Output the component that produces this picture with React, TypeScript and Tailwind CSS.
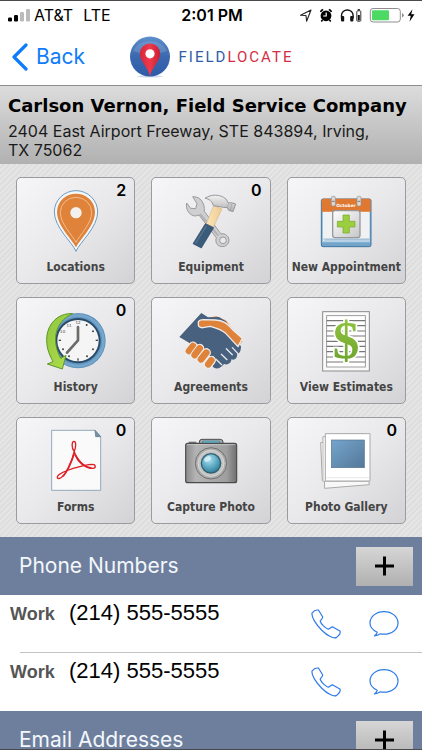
import type { ReactNode } from "react";

const sans = "font-['Inter','Liberation_Sans',sans-serif]";
const labelFont = "font-['DejaVu_Sans_Condensed','DejaVu_Sans',sans-serif]";

function StatusBar() {
  return (
    <div className="flex h-7 items-center justify-between pl-2 pr-1.5 text-black">
      <div className="flex flex-1 items-center">
        <svg viewBox="0 0 22 13" className="mr-1 h-[13px] w-[22px]">
          <rect x="0" y="8.5" width="4" height="4" rx="1.2" fill="#000" />
          <rect x="6" y="6" width="4" height="6.5" rx="1.2" fill="#000" />
          <rect x="12" y="3" width="4" height="9.5" rx="1.2" fill="#bbb" />
          <rect x="18" y="0" width="4" height="12.5" rx="1.2" fill="#bbb" />
        </svg>
        <span className="text-base">AT&amp;T</span>
        <span className="ml-2.5 text-base">LTE</span>
      </div>
      <span className="text-base font-semibold">2:01 PM</span>
      <div className="flex flex-1 items-center justify-end">
        <svg viewBox="0 0 117 18" className="h-[18px] w-[117px]">
          <path d="M1.5 9.2 12 4 7.6 15.2 7 9.5Z" fill="none" stroke="#222" strokeWidth="1.1" strokeLinejoin="round" />
          <circle cx="27" cy="9.8" r="5.4" fill="#000" />
          <path d="M21.6 6a3 3 0 0 1 2.6-2.4M32.4 6a3 3 0 0 0-2.6-2.4M23.5 14l-1.2 1.6M30.5 14l1.2 1.6" stroke="#000" strokeWidth="1.6" fill="none" />
          <path d="M27.2 6.5v3.5h-3" fill="none" stroke="#fff" strokeWidth="1.2" />
          <path d="M42.5 12.5V9.2a5.8 5.2 0 0 1 11.6 0v3.3" fill="none" stroke="#111" strokeWidth="1.4" />
          <rect x="42" y="10" width="3.2" height="5.6" rx="1" fill="#111" />
          <rect x="51.2" y="10" width="3.2" height="5.6" rx="1" fill="#111" />
          <rect x="57.8" y="4.8" width="4" height="10.4" rx=".8" fill="none" stroke="#333" strokeWidth="1" />
          <rect x="58.7" y="3" width="2.2" height="1.5" fill="#333" />
          <rect x="58.8" y="9" width="2" height="5.4" fill="#111" />
          <rect x="71.3" y="2.5" width="30" height="13.5" rx="2.8" fill="#fff" stroke="#8d8d8d" strokeWidth="1" />
          <rect x="73" y="4.3" width="17" height="10" rx="1" fill="#4cd964" />
          <path d="M103 7v4.6q1.8-.8 1.8-2.3T103 7Z" fill="#8d8d8d" />
          <path d="M113.5 3.2 108.6 9.8h3.2l-1.3 6 5-7.6h-3.3Z" fill="#000" />
        </svg>
      </div>
    </div>
  );
}

function NavBar() {
  return (
    <div className="grid h-14 grid-cols-[1fr_auto_1fr] items-center px-3">
      <button type="button" className="flex items-center gap-2 justify-self-start text-[#0f7cfa]">
        <svg viewBox="0 0 16 28" className="h-7 w-4">
          <path d="M14 2 2 14l12 12" fill="none" stroke="currentColor" strokeWidth="3.2" strokeLinecap="round" strokeLinejoin="round" />
        </svg>
        <span className="text-[21px] leading-7">Back</span>
      </button>
      <div className="flex items-center gap-2">
        <svg viewBox="0 0 42 42" className="h-[42px] w-[42px]">
          <defs>
            <linearGradient id="globe" x1="0" y1="0" x2="0" y2="1">
              <stop offset="0" stopColor="#5d8fcd" />
              <stop offset=".5" stopColor="#3c68ae" />
              <stop offset="1" stopColor="#2d5ba8" />
            </linearGradient>
            <linearGradient id="redPin" x1="0" y1="0" x2="1" y2="0">
              <stop offset="0" stopColor="#d8273a" />
              <stop offset=".5" stopColor="#ee3a4c" />
              <stop offset="1" stopColor="#c81f33" />
            </linearGradient>
          </defs>
          <ellipse cx="21" cy="40.3" rx="13" ry="1.2" fill="#cfdaec" />
          <circle cx="21" cy="20.6" r="20" fill="url(#globe)" />
          <path d="M4 15a18 15 0 0 1 34 0Q21 22 4 15Z" fill="#fff" opacity=".13" />
          <path d="M21 40.4C19.5 32 10.8 25 10.8 17.8a10.2 10.2 0 0 1 20.4 0C31.2 25 22.5 32 21 40.4Z" fill="url(#redPin)" />
          <circle cx="21" cy="17.8" r="4.6" fill="#fff" />
        </svg>
        <span className="font-['Roboto',sans-serif] text-[15px] tracking-[2px]">
          <span className="text-[#2f5da8]">FIELD</span>
          <span className="text-[#d42e45]">LOCATE</span>
        </span>
      </div>
    </div>
  );
}

function Icon({ children }: { children: ReactNode }) {
  return (
    <svg viewBox="48 30 300 225" className="h-[75px] w-[100px]">
      {children}
    </svg>
  );
}

const locations = (
  <Icon>
    <path d="M198 244C186 216 133 172 133 126a65 64 0 0 1 130 0C263 172 210 216 198 244Z" fill="#f4f6f8" stroke="#6c9bc0" strokeWidth="3" />
    <path d="M198 232C188 210 141 168 141 126a57 55 0 0 1 114 0C255 168 208 210 198 232Z" fill="#e0833a" />
    <path d="M198 217C188 196 151 162 151 127a47 45 0 0 1 94 0C245 162 208 196 198 217Z" fill="none" stroke="#f3bb8d" strokeWidth="3" />
    <circle cx="198" cy="128" r="17" fill="#f3f1ef" />
  </Icon>
);

const equipment = (
  <Icon>
    <defs>
      <linearGradient id="steel" x1="0" y1="0" x2="0" y2="1">
        <stop offset="0" stopColor="#f2f2f2" />
        <stop offset="1" stopColor="#b0b0b0" />
      </linearGradient>
      <linearGradient id="wood" x1="0" y1="0" x2="1" y2="0">
        <stop offset="0" stopColor="#fbe5ba" />
        <stop offset="1" stopColor="#eecb92" />
      </linearGradient>
    </defs>
    <path d="M143 80 156 101 152 116 137 115 125 99C121 116 132 137 151 138L162 135 214 203C208 221 222 233 238 229 253 224 256 207 246 197 239 190 231 191 228 192L178 124C180 101 168 79 143 80Z" fill="#cfcfd1" stroke="#9b9b9e" strokeWidth="3" strokeLinejoin="round" />
    <path d="M165 132 220 197" stroke="#b3b3b6" strokeWidth="6" />
    <circle cx="234" cy="211" r="10" fill="#e9e9e9" stroke="#9b9b9e" strokeWidth="3" />
    <path d="M206 107 231 117 205 172 184 161Z" fill="url(#wood)" stroke="#d3ad74" strokeWidth="1.5" />
    <path d="M181 161 206 173 169 234 144 221Z" fill="#3b5b7b" stroke="#2c4762" strokeWidth="2" strokeLinejoin="round" />
    <path d="M184 168 152 220" stroke="#55758f" strokeWidth="4" />
    <path d="M180 85C198 72 226 72 243 87L250 99 259 98 272 102 264 125 251 121 247 113 235 112 205 107C202 95 193 86 180 85Z" fill="url(#steel)" stroke="#989898" strokeWidth="3" strokeLinejoin="round" />
    <path d="M251 100 247 113M261 100 255 121" stroke="#999" strokeWidth="2" />
  </Icon>
);

const appointment = (
  <Icon>
    <defs>
      <linearGradient id="plusPad" x1="0" y1="0" x2="1" y2="1">
        <stop offset="0" stopColor="#fff" />
        <stop offset="1" stopColor="#c6c6c6" />
      </linearGradient>
    </defs>
    <rect x="124" y="87" width="149" height="143" rx="5" fill="#73a5cb" stroke="#3e759f" strokeWidth="3" />
    <path d="M127 100H270V217H127Z" fill="#b9d1e4" />
    <path d="M129 124H268V207H138L129 214Z" fill="#f0f1f2" />
    <path d="M125 125V91q0-5 5-5H267q5 0 5 5V125Z" fill="#df7931" />
    <path d="M129 207H268" stroke="#7da5c7" strokeWidth="2" />
    <text x="198" y="111" textAnchor="middle" fontSize="13" fontWeight="700" fill="#fff" className="font-['DejaVu_Sans',sans-serif]">October</text>
    <rect x="154" y="79" width="12" height="29" rx="4" fill="#d9d9d9" stroke="#929292" strokeWidth="2" />
    <rect x="231" y="79" width="12" height="29" rx="4" fill="#d9d9d9" stroke="#929292" strokeWidth="2" />
    <path d="M156 94H164M233 94H241" stroke="#777" strokeWidth="3" />
    <rect x="158" y="122" width="82" height="81" rx="7" fill="url(#plusPad)" stroke="#96999c" strokeWidth="4" />
    <path d="M189 135h19v19h17v17h-17v18h-19v-18h-17v-17h17Z" fill="#9bcf3f" stroke="#74a62c" strokeWidth="2" />
  </Icon>
);

const history = (
  <Icon>
    <defs>
      <linearGradient id="greenArrow" x1="0" y1="0" x2="1" y2="1">
        <stop offset="0" stopColor="#8dc641" />
        <stop offset="1" stopColor="#b4e04b" />
      </linearGradient>
    </defs>
    <circle cx="204" cy="152" r="83" fill="#5f94bd" />
    <circle cx="204" cy="152" r="76" fill="none" stroke="#76a6cb" strokeWidth="8" />
    <circle cx="204" cy="152" r="68" fill="#294a68" />
    <circle cx="204" cy="152" r="62" fill="#f5f5f5" />
    <g fill="#444">
      <rect x="257" y="149" width="7" height="4" />
      <rect x="146" y="149" width="7" height="4" />
      <rect x="202" y="205" width="4" height="7" />
      <circle cx="249" cy="178" r="3" />
      <circle cx="231" cy="199" r="3" />
      <circle cx="159" cy="178" r="3" />
      <circle cx="177" cy="199" r="3" />
      <circle cx="249" cy="124" r="3" />
      <circle cx="230" cy="105" r="3" />
    </g>
    <g fontSize="12" fill="#444" textAnchor="middle" className="font-['DejaVu_Sans',sans-serif]">
      <text x="204" y="102">12</text>
      <text x="177" y="110">11</text>
      <text x="158" y="128">10</text>
    </g>
    <path d="M204 111V151L171 188" fill="none" stroke="#6b6b6b" strokeWidth="8" strokeLinecap="round" strokeLinejoin="round" />
    <path d="M188 71C144 68 110 103 110 149C110 180 121 199 129 215L112 222 157 237 168 196 152 205C139 180 135 158 137 139C140 107 160 83 188 71Z" fill="url(#greenArrow)" stroke="#5f9627" strokeWidth="3" strokeLinejoin="round" />
  </Icon>
);

const agreements = (
  <Icon>
    <path d="M190 83 214 79 242 91 292 154 280 169 247 128Z" fill="#e0833a" />
    <path d="M169 69 189 82 222 81 245 96 236 113 288 169C288 183 283 192 276 193 278 204 269 212 259 208 259 220 247 226 237 222 229 233 216 239 207 233L132 158 103 141Z" fill="#47617e" />
    <path d="M244 176 262 194M229 193 246 209M213 208 230 224M262 173 279 191" fill="none" stroke="#e9e9eb" strokeWidth="4" strokeLinecap="round" />
    <path d="M160 101C158 92 166 89 176 89L211 90C235 91 247 100 263 119L292 145 279 170 242 130C228 117 210 113 195 109L174 113C164 114 159 109 160 101Z" fill="#e0833a" stroke="#ededee" strokeWidth="4" strokeLinejoin="round" />
    <g stroke="#ededee" strokeLinecap="round">
      <path d="M132 183 144 168M149 195 164 175M168 208 184 188M190 223 199 211" strokeWidth="27" />
      <path d="M132 183 144 168" stroke="#e0833a" strokeWidth="20" />
      <path d="M149 195 164 175" strokeWidth="26" />
      <path d="M149 195 164 175" stroke="#e0833a" strokeWidth="20" />
      <path d="M168 208 184 188" strokeWidth="26" />
      <path d="M168 208 184 188" stroke="#e0833a" strokeWidth="20" />
      <path d="M190 223 199 211" strokeWidth="26" />
      <path d="M190 223 199 211" stroke="#e0833a" strokeWidth="20" />
    </g>
  </Icon>
);

const estimates = (
  <Icon>
    <defs>
      <linearGradient id="dollar" x1="0" y1="0" x2="0" y2="1">
        <stop offset="0" stopColor="#96cb42" />
        <stop offset="1" stopColor="#699e2c" />
      </linearGradient>
    </defs>
    <rect x="128" y="65" width="140" height="178" fill="#fafafa" stroke="#8b8b8b" strokeWidth="3" />
    <rect x="140" y="77" width="116" height="154" fill="#fff" stroke="#8b8b8b" strokeWidth="2.5" />
    <path d="M140 92H256M140 107H256M140 123H256M140 138H256M140 154H256M140 169H256M140 185H256M140 201H256M140 216H256" stroke="#777" strokeWidth="3.5" />
    <text x="198" y="203" textAnchor="middle" fontSize="160" fontWeight="700" fill="url(#dollar)" stroke="#fff" strokeWidth="10" paintOrder="stroke" className="font-['Liberation_Serif',serif]">$</text>
  </Icon>
);

const forms = (
  <Icon>
    <path d="M125 61H255L272 80V241H125Z" fill="#fafafa" stroke="#7e9bb2" strokeWidth="2.5" />
    <path d="M255 61 272 80H257Z" fill="#7691a6" stroke="#587489" strokeWidth="2" />
    <path d="M192 123C184 113 185 94 192 94C199 94 198 111 193 124C186 153 166 199 149 205C142 207 139 202 145 196C157 184 218 164 247 163C258 163 259 174 248 175C226 178 199 146 192 123Z" fill="none" stroke="#dd1f26" strokeWidth="4" strokeLinejoin="round" />
    <path d="M193 127C188 150 170 191 157 200M195 134C206 158 226 172 245 174" fill="none" stroke="#dd1f26" strokeWidth="5" />
  </Icon>
);

const camera = (
  <Icon>
    <defs>
      <linearGradient id="body" x1="0" y1="0" x2="1" y2="0">
        <stop offset="0" stopColor="#8a8a8a" />
        <stop offset=".2" stopColor="#b4b4b4" />
        <stop offset=".8" stopColor="#9f9f9f" />
        <stop offset="1" stopColor="#707070" />
      </linearGradient>
      <radialGradient id="lens" cx=".4" cy=".3" r=".8">
        <stop offset="0" stopColor="#b3e2ef" />
        <stop offset=".5" stopColor="#5dabc4" />
        <stop offset="1" stopColor="#246f8a" />
      </radialGradient>
    </defs>
    <path d="M163 104V96q0-8 8-8H226q8 0 8 8V104Z" fill="#aaa" stroke="#4c4c4c" strokeWidth="3" />
    <path d="M173 103V93H224V103Z" fill="#69b5cb" stroke="#428197" strokeWidth="2" />
    <path d="M131 100V95H154V100Z" fill="#777" />
    <rect x="122" y="100" width="153" height="118" rx="6" fill="url(#body)" stroke="#4b4b4b" strokeWidth="3.5" />
    <path d="M126 104H271" stroke="#d6d6d6" strokeWidth="2" />
    <circle cx="198" cy="160" r="47" fill="#adadad" stroke="#707070" strokeWidth="3" />
    <circle cx="198" cy="160" r="39" fill="#c4c4c4" stroke="#e2e2e2" strokeWidth="2" />
    <circle cx="198" cy="160" r="29" fill="url(#lens)" stroke="#315f70" strokeWidth="4" />
    <ellipse cx="188" cy="147" rx="11" ry="7" fill="#d8f2f8" opacity=".8" transform="rotate(-35 188 147)" />
  </Icon>
);

const gallery = (
  <Icon>
    <defs>
      <linearGradient id="photo" x1="0" y1="0" x2="1" y2="1">
        <stop offset="0" stopColor="#76a5cc" />
        <stop offset="1" stopColor="#537899" />
      </linearGradient>
    </defs>
    <g fill="#f8f8f8" stroke="#a9a9a9" strokeWidth="3">
      <path d="M129 80 250 72 268 224 134 235Z" />
      <path d="M122 98 255 78 266 211 127 212Z" />
      <path d="M129 80H267V214H129Z" stroke="#bbb" />
      <path d="M136 71H270V213H136Z" fill="#fff" />
    </g>
    <path d="M139 203H268" stroke="#ddd" strokeWidth="2" />
    <rect x="154" y="90" width="99" height="83" fill="url(#photo)" stroke="#54748e" strokeWidth="2" />
  </Icon>
);

const tiles: { label: string; icon: ReactNode; count?: number }[] = [
  { label: "Locations", icon: locations, count: 2 },
  { label: "Equipment", icon: equipment, count: 0 },
  { label: "New Appointment", icon: appointment },
  { label: "History", icon: history, count: 0 },
  { label: "Agreements", icon: agreements },
  { label: "View Estimates", icon: estimates },
  { label: "Forms", icon: forms, count: 0 },
  { label: "Capture Photo", icon: camera },
  { label: "Photo Gallery", icon: gallery, count: 0 },
];

function Tile({ label, icon, count }: { label: string; icon: ReactNode; count?: number }) {
  return (
    <button
      type="button"
      className="relative flex h-[107px] flex-col items-center gap-1 rounded-[5px] border border-[#9b9b9f] bg-linear-to-br from-[#f6f6f8] via-[#e9e9eb] to-[#d3d3d5] pt-0.5"
    >
      {icon}
      <span className={`${labelFont} text-xs leading-4 font-bold whitespace-nowrap text-[#444]`}>{label}</span>
      {count !== undefined && (
        <span className="absolute top-0.5 right-2 text-base leading-5 font-semibold text-black">{count}</span>
      )}
    </button>
  );
}

function SectionHeader({ title }: { title: string }) {
  return (
    <div className="flex h-[58px] shrink-0 items-center justify-between bg-[#6e7f9e] pr-[9px] pl-[19px]">
      <h2 className="text-[21px] leading-6 text-[#f4f7fb]">{title}</h2>
      <button
        type="button"
        aria-label={`Add to ${title}`}
        className="flex h-[39px] w-[57px] items-center justify-center bg-linear-to-b from-[#d6d6d6] to-[#b0b0b0]"
      >
        <svg viewBox="0 0 20 20" className="h-5 w-5">
          <path d="M9.5 .5v19M0 10h19" stroke="#000" strokeWidth="3" />
        </svg>
      </button>
    </div>
  );
}

function PhoneRow({ kind, number }: { kind: string; number: string }) {
  return (
    <li className="group h-[58px] shrink-0">
      <div className="flex h-[57px] justify-between pr-[23px] pl-2.5 font-['Liberation_Sans',sans-serif]">
        <div className="flex items-baseline pt-1.5">
          <span className="w-[59px] text-[18px] leading-6 font-bold text-[#555]">{kind}</span>
          <span className="text-[22px] leading-6 text-black">{number}</span>
        </div>
        <div className="flex items-center gap-7 text-[#2f7bea]">
          <button type="button" aria-label={`Call ${number}`}>
            <svg viewBox="0 0 30 30" className="h-[30px] w-[30px]" fill="none" stroke="currentColor" strokeWidth="1.2" strokeLinejoin="round">
              <path d="M1 4.2C3 1.6 5.4.6 7.6 1.2L11.6 7.8C12.2 9.2 9.6 10.7 9.2 12.2C10.2 15.2 14.2 19.2 17.2 20.2C18.8 20 20.2 17.6 21.8 17.9L28.8 21.9C29.9 23.7 28.6 26 25.6 28.4C22.6 30 16.4 26.8 11 21.5C4.6 15.2.4 8 1 4.2Z" />
            </svg>
          </button>
          <button type="button" aria-label={`Message ${number}`}>
            <svg viewBox="0 0 30 28" className="h-7 w-[30px]" fill="none" stroke="currentColor" strokeWidth="1.2" strokeLinejoin="round">
              <path d="M8.2 22.2C3.8 20 1 16.8 1 12.9C1 6.6 7.2 1.6 15 1.6S29 6.6 29 12.9 22.8 24.2 15 24.2C13.8 24.2 12.5 24.1 11.4 23.8C9.6 25 7.5 25.8 5.4 26C7 25 8 23.6 8.2 22.2Z" />
            </svg>
          </button>
        </div>
      </div>
      <div className="ml-5 h-px bg-[#c4c4c8] group-last:bg-transparent" />
    </li>
  );
}

export default function App() {
  return (
    <div className={`${sans} flex h-dvh flex-col overflow-hidden border-y border-[#4a4a4e] bg-white`}>
      <header className="shrink-0">
        <StatusBar />
        <NavBar />
      </header>
      <main className="flex flex-1 flex-col overflow-hidden">
        <div className="shrink-0 border-t border-[#8e8e8e] bg-linear-to-b from-[#dcdcdc] to-[#b1b1b1] px-2 pt-2 pb-1 text-black">
          <h1 className="font-['DejaVu_Sans',sans-serif] text-[18px] leading-6 font-bold whitespace-nowrap">
            Carlson Vernon, Field Service Company
          </h1>
          <p className="mt-1 text-base leading-[19px] text-[#1a1a1a]">
            2404 East Airport Freeway, STE 843894, Irving,
            <br />
            TX 75062
          </p>
        </div>
        <div className="grid shrink-0 grid-cols-3 gap-x-4 gap-y-[13px] bg-[repeating-linear-gradient(135deg,#e5e5e5_0_2px,#dedede_2px_4px)] px-4 py-[13px]">
          {tiles.map((tile) => (
            <Tile key={tile.label} {...tile} />
          ))}
        </div>
        <SectionHeader title="Phone Numbers" />
        <ul>
          <PhoneRow kind="Work" number="(214) 555-5555" />
          <PhoneRow kind="Work" number="(214) 555-5555" />
        </ul>
        <SectionHeader title="Email Addresses" />
      </main>
    </div>
  );
}
